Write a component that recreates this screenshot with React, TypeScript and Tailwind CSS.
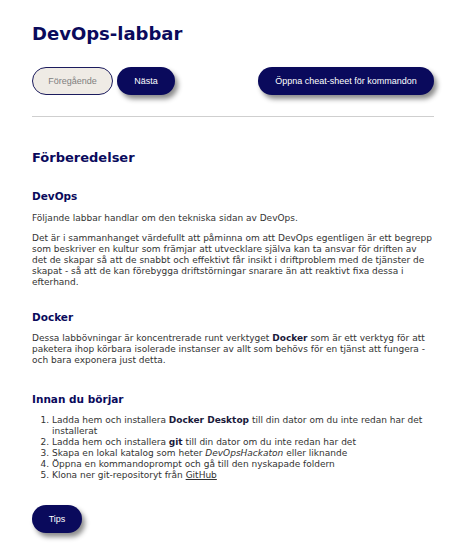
const navy = "bg-[#0a0a5c]"

function PillButton({ label, width, muted }: { label: string; width: string; muted?: boolean }) {
  if (muted) {
    return (
      <button
        className={`${width} h-7 rounded-full border border-[#1c1c5e] bg-[#efebe5] text-[9px] text-[#808080] [font-family:'Liberation_Sans',Arial,sans-serif]`}
      >
        {label}
      </button>
    )
  }
  return (
    <button
      className={`${width} h-7 rounded-full ${navy} text-[9px] text-white [font-family:'Liberation_Sans',Arial,sans-serif] shadow-[3px_4px_5px_rgba(0,0,0,0.45)]`}
    >
      {label}
    </button>
  )
}

export default function App() {
  return (
    <div className="min-h-[558px] bg-white pl-8 pr-9 text-[9px] leading-[11px] text-[#333] [font-family:'DejaVu_Sans',Verdana,sans-serif]">
      {/* Header */}
      <h1 className="pt-[23px] text-[18px] leading-[22px] font-bold text-[#0a0a5c]">DevOps-labbar</h1>

      <div className="mt-[22px] flex items-center justify-between">
        <div className="flex gap-1">
          <PillButton label="Föregående" width="w-[81px]" muted />
          <PillButton label="Nästa" width="w-[58px]" />
        </div>
        <PillButton label="Öppna cheat-sheet för kommandon" width="w-[176px]" />
      </div>

      <hr className="mt-[21px] border-t border-[#cfcfcf]" />

      {/* Förberedelser */}
      <h2 className="mt-[33px] text-[13px] leading-[16px] font-bold text-[#0a0a5c]">Förberedelser</h2>

      <h3 className="mt-[24px] text-[10.5px] leading-[13px] font-bold text-[#0a0a5c]">DevOps</h3>
      <p className="mt-[10px]">Följande labbar handlar om den tekniska sidan av DevOps.</p>
      <p className="mt-[9px]">
        Det är i sammanhanget värdefullt att påminna om att DevOps egentligen är ett begrepp som beskriver en
        kultur som främjar att utvecklare själva kan ta ansvar för driften av det de skapar så att de snabbt och
        effektivt får insikt i driftproblem med de tjänster de skapat - så att de kan förebygga driftstörningar
        snarare än att reaktivt fixa dessa i efterhand.
      </p>

      <h3 className="mt-[23px] text-[10.5px] leading-[13px] font-bold text-[#0a0a5c]">Docker</h3>
      <p className="mt-[9px]">
        Dessa labbövningar är koncentrerade runt verktyget <b className="text-[#1a1a3a]">Docker</b> som är ett verktyg
        för att paketera ihop körbara isolerade instanser av allt som behövs för en tjänst att fungera - och bara
        exponera just detta.
      </p>

      <h3 className="mt-[27px] text-[10.5px] leading-[13px] font-bold text-[#0a0a5c]">Innan du börjar</h3>
      <ol className="mt-[9px] list-decimal pl-[20px]">
        <li>
          Ladda hem och installera <b className="text-[#1a1a3a]">Docker Desktop</b> till din dator om du inte redan har
          det installerat
        </li>
        <li>
          Ladda hem och installera <b className="text-[#1a1a3a]">git</b> till din dator om du inte redan har det
        </li>
        <li>
          Skapa en lokal katalog som heter <i>DevOpsHackaton</i> eller liknande
        </li>
        <li>Öppna en kommandoprompt och gå till den nyskapade foldern</li>
        <li>
          Klona ner git-repositoryt från <a className="underline">GitHub</a>
        </li>
      </ol>

      <div className="mt-[24px] pb-6">
        <PillButton label="Tips" width="w-[50px]" />
      </div>
    </div>
  )
}
